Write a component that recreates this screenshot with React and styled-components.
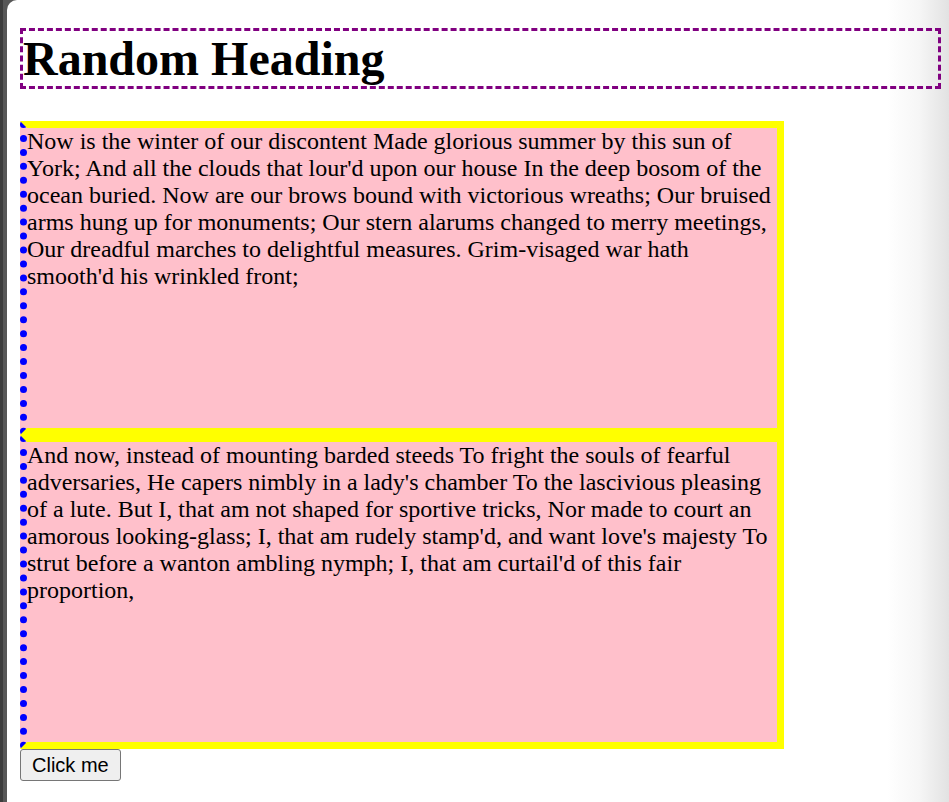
import React from 'react';
import styled, { createGlobalStyle } from 'styled-components';

const GlobalStyle = createGlobalStyle`
  html, body {
    margin: 0;
    padding: 0;
    height: 100%;
    overflow: hidden;
  }
  body {
    font-family: "Liberation Serif", "Times New Roman", serif;
    background: #3c3c3c;
  }
`;

const Shell = styled.div`
  display: flex;
  min-height: 100vh;
  padding-left: 3px;
  background: #3c3c3c;
`;

const Bezel = styled.div`
  flex: 1;
  display: flex;
  padding-left: 4px;
  background: #575757;
`;

const Page = styled.main`
  flex: 1;
  display: flex;
  flex-direction: column;
  align-items: flex-start;
  padding: 28px 8px 0 13px;
  border-top-left-radius: 10px;
  background: linear-gradient(
    to right,
    #ffffff calc(100% - 62px),
    #f6f6f6 calc(100% - 30px),
    #e2e2e2 100%
  );
`;

const Heading = styled.h1`
  align-self: stretch;
  margin: 0 0 32px;
  border: 3px dashed purple;
  font-size: 48px;
  line-height: 55px;
  font-weight: bold;
  color: #000;
`;

const Passage = styled.div`
  width: 750px;
  height: 300px;
  background: pink;
  border: 7px solid yellow;
  border-left: 7px dotted blue;
  font-size: 24px;
  line-height: 27px;
  color: #000;
`;

const Button = styled.button`
  height: 32px;
  padding: 0 11px;
  font-family: "Liberation Sans", Arial, sans-serif;
  font-size: 20px;
  color: #000;
  background: #efefef;
  border: 1px solid #767676;
  border-radius: 3px;
`;

const passages = [
  "Now is the winter of our discontent Made glorious summer by this sun of York; And all the clouds that lour'd upon our house In the deep bosom of the ocean buried. Now are our brows bound with victorious wreaths; Our bruised arms hung up for monuments; Our stern alarums changed to merry meetings, Our dreadful marches to delightful measures. Grim-visaged war hath smooth'd his wrinkled front;",
  "And now, instead of mounting barded steeds To fright the souls of fearful adversaries, He capers nimbly in a lady's chamber To the lascivious pleasing of a lute. But I, that am not shaped for sportive tricks, Nor made to court an amorous looking-glass; I, that am rudely stamp'd, and want love's majesty To strut before a wanton ambling nymph; I, that am curtail'd of this fair proportion,",
];

const App = () => {
  return (
    <>
      <GlobalStyle />
      <Shell>
        <Bezel>
          <Page>
            <Heading>Random Heading</Heading>
            {passages.map((text, i) => (
              <Passage key={i}>{text}</Passage>
            ))}
            <Button>Click me</Button>
          </Page>
        </Bezel>
      </Shell>
    </>
  );
};

export default App;
